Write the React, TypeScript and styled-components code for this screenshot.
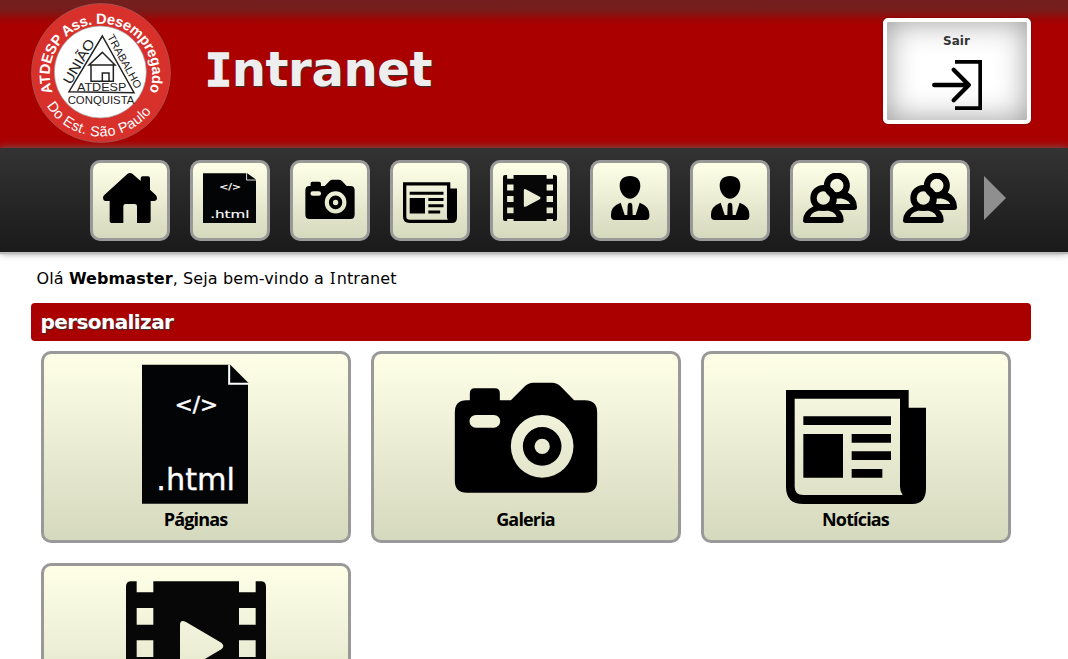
import React from "react";
import styled, { createGlobalStyle } from "styled-components";

const GlobalStyle = createGlobalStyle`
  * { box-sizing: border-box; }
  body {
    margin: 0;
    height: 659px;
    overflow: hidden;
    background: #fff;
    color: #000;
    font-family: Verdana, "DejaVu Sans", sans-serif;
    font-size: 16px;
  }
`;

const Header = styled.header`
  display: flex;
  align-items: flex-start;
  height: 148px;
  padding: 0 37px 0 31px;
  background:
    linear-gradient(to bottom, #741f1f 0, #741e1d 8px, #7d1817 12px, #8b1010 15px, #9c0605 19px, #a00 25px, rgba(170, 0, 0, 0) 26px),
    #a00;
`;

const LogoImage = styled.svg`
  width: 140px;
  height: 140px;
  margin-top: 3px;
  flex: none;
`;

const Title = styled.h1`
  margin: 41px 0 0 34px;
  flex: 1;
  font-size: 48px;
  line-height: 56px;
  font-weight: bold;
  letter-spacing: -0.35px;
  color: #eee;
  text-shadow: 1px 1px 1px #333;
`;

const TitleInitial = styled.span`
  font-family: Verdana, "DejaVu Sans Mono", monospace;
  font-size: 45px;
  line-height: 1;
  letter-spacing: -0.4px;
  -webkit-text-stroke: 1.4px #eee;
`;

const SerifI = styled.span`
  margin: 0 1.2px 0 0.8px;
  font-family: Verdana, "Noto Sans", sans-serif;
  line-height: 1;
`;

const ExitButton = styled.a`
  display: flex;
  flex-direction: column;
  align-items: center;
  width: 148px;
  height: 106px;
  margin-top: 18px;
  padding: 10px 1px 0 0;
  border: 4px solid #fff;
  border-radius: 5px;
  background: #fff;
  box-shadow: inset 0 0 30px #999, 0 0 2px #600;
  color: #333;
  font-size: 12px;
  line-height: 18px;
  font-weight: bold;
  text-decoration: none;
`;

const ExitImage = styled.svg`
  width: 50px;
  height: 50px;
  margin: 10px 0 0 1px;
`;

const Nav = styled.nav`
  position: relative;
  display: flex;
  align-items: flex-start;
  gap: 20px;
  height: 104px;
  padding: 12px 0 0 90px;
  background: linear-gradient(#333, #1a1a1a);
  box-shadow: 0 2px 1px #bbb, 0 0 8px #666;
`;

const tile = `
  border: 3px solid #999;
  border-radius: 10px;
  background: linear-gradient(#ffffe8, #d5d9bd);
`;

const NavTile = styled.a`
  ${tile}
  width: 80px;
  height: 81px;
  padding: 10px;
  flex: none;
`;

const Icon = styled.svg<{ $w: number; $h: number }>`
  display: block;
  width: ${(p) => p.$w}px;
  height: ${(p) => p.$h}px;
  flex: none;
`;

const NextArrow = styled.svg`
  width: 22px;
  height: 44px;
  margin: 16px 0 0 -6px;
`;

const Main = styled.main`
  padding: 0 37px 0 31px;
`;

const Greeting = styled.p`
  margin: 0;
  padding: 16px 0 0 5.5px;
  height: 51px;
  line-height: 22px;
  letter-spacing: 0.11px;
`;

const SectionTitle = styled.h2`
  margin: 0 0 10px;
  height: 38px;
  padding-left: 9.5px;
  border-radius: 4px;
  background: #a00;
  color: #fff;
  font-size: 20px;
  line-height: 38px;
  letter-spacing: -0.58px;
  text-shadow: 1px 1px 1px #333;
`;

const Cards = styled.div`
  display: grid;
  grid-template-columns: repeat(3, 310px);
  gap: 20px;
  padding-left: 10px;
`;

const Card = styled.a`
  ${tile}
  display: flex;
  flex-direction: column;
  align-items: center;
  height: 192px;
  padding-top: 10px;
`;

const CardLabel = styled.span`
  padding-right: 1px;
  color: #000;
  font-family: "Trebuchet MS", "Open Sans", sans-serif;
  font-size: 18px;
  line-height: 30px;
  font-weight: 700;
  letter-spacing: -0.85px;
`;

function Logo() {
  return (
    <LogoImage viewBox="33 9 420 420" fontFamily="Liberation Sans, Arial, sans-serif">
      <defs>
        <path id="arcTop" d="M 98 277 A 154 154 0 1 1 388 277" />
        <path id="arcBottom" d="M 80 317 A 190 190 0 0 0 406 317" />
      </defs>
      <circle cx="243" cy="219" r="208" fill="#d8302b" stroke="#a85a55" strokeWidth="2.5" />
      <circle cx="241" cy="216" r="138" fill="#fff" stroke="#999" strokeWidth="2" />
      <text fill="#fff" fontWeight="bold" fontSize="44">
        <textPath href="#arcTop" textLength="588">ATDESP Ass. Desempregado</textPath>
      </text>
      <text fill="#fff" fontSize="43">
        <textPath href="#arcBottom" textLength="370">Do Est. São Paulo</textPath>
      </text>
      <g fill="none" stroke="#222" strokeWidth="4.5">
        <path d="M247 108L147 275L342 278Z" />
        <path d="M207 195L247 157L285 195ZM213 195V244H280V195M247 244V219H267V244" />
      </g>
      <g fill="#222">
        <text x="171" y="274" fontSize="31" textLength="148" lengthAdjust="spacingAndGlyphs">ATDESP</text>
        <text x="143" y="311" fontSize="32" textLength="200" lengthAdjust="spacingAndGlyphs">CONQUISTA</text>
        <text fontSize="42" textLength="148" lengthAdjust="spacingAndGlyphs" transform="translate(152 256) rotate(-60)">UNIÃO</text>
        <text fontSize="32" textLength="180" lengthAdjust="spacingAndGlyphs" transform="translate(261 110) rotate(61.5)">TRABALHO</text>
      </g>
    </LogoImage>
  );
}

type IconName = "home" | "html" | "camera" | "news" | "film" | "person" | "people";

const viewBoxes: Record<IconName, string> = {
  home: "69 84 162 150",
  html: "336 73 324 419",
  camera: "249.5 72 468 420",
  news: "273 72 420 420",
  film: "288 78 420 420",
  person: "669 84 162 150",
  people: "369 84 162 150",
};

const drawings: Record<IconName, React.ReactNode> = {
  home: (
    <path d="M75 168Q69 166 69 158Q69 154 73 150L142 87Q150 81 158 87L182 108V100Q182 94 188 94H204Q210 94 210 100V134L227 150Q231 154 231 160Q230 168 222 168H212V227Q212 234 205 234H171V184Q171 177 164 177H137Q130 177 130 184V234H97Q89 234 89 227V168Z" />
  ),
  html: (
    <>
      <path fill="#020406" d="M336 75H601L654 128V491H336Z" />
      <path fill="none" stroke="#fff" strokeWidth="6" d="M597.5 75V132H654" />
      <g fill="#fff" stroke="#fff" fontFamily="DejaVu Sans, sans-serif" fontWeight="400">
        <text x="434" y="217" fontSize="66" strokeWidth="1.5" textLength="130" lengthAdjust="spacingAndGlyphs">&lt;/&gt;</text>
        <text x="379" y="449" fontSize="92" strokeWidth="1" textLength="236" lengthAdjust="spacingAndGlyphs">.html</text>
      </g>
    </>
  ),
  camera: (
    <path
      fillRule="evenodd"
      d="M305 181H315V160q0-15 15-15H390q15 0 15 15V181H438L480 139Q491 128 505 128H562Q576 128 587 139L628 181H660Q697 181 697 217V422Q697 458 660 458H306Q270 458 270 422V217Q270 181 305 181ZM333 225a19 19 0 0 0 0 38H387a19 19 0 0 0 0-38ZM438 319a94 94 0 1 0 188 0a94 94 0 1 0-188 0ZM474 319a58 58 0 1 0 116 0a58 58 0 1 0-116 0ZM509 319a23 23 0 1 0 46 0a23 23 0 1 0-46 0Z"
    />
  ),
  news: (
    <path
      fillRule="evenodd"
      d="M273 150H641V203H693V445Q693 492 652 492H325Q273 492 273 440ZM299 176V440Q299 465 325 465H623Q615 455 615 440V176ZM325 229H588V255H325ZM325 282H444V413H325ZM470 282H588V308H470ZM470 334H588V360H470ZM470 387H562V413H470Z"
    />
  ),
  film: (
    <path
      fill="#070707"
      fillRule="evenodd"
      d="M304 94H320V127H370V94H627V127H677V94H692Q708 94 708 110V465Q708 481 692 481H677V464H627V481H370V464H320V481H304Q288 481 288 465V110Q288 94 304 94ZM320 174V224H370V174ZM320 271V321H370V271ZM320 367V417H370V367ZM627 174V224H677V174ZM627 271V321H677V271ZM627 367V417H677V367ZM450 225Q450 207 468 216L574 278Q586 288 574 298L468 360Q450 369 450 351Z"
    />
  ),
  person: (
    <path d="M750 93C770 93 781 104 781 122C781 143 765 161 750 161C735 161 719 143 719 122C719 104 730 93 750 93ZM722 173L734 210H742L743 182Q744 173 750 173Q757 173 757 182L758 210H767L779 173Q808 184 808 208V214Q808 225 797 225H704Q693 225 693 214V208Q693 184 722 173Z" />
  ),
  people: (
    <>
      <circle cx="470.5" cy="121.5" r="29.5" fill="none" stroke="#000" strokeWidth="19" />
      <circle cx="430" cy="159" r="29.5" fill="none" stroke="#000" strokeWidth="19" />
      <path
        fillRule="evenodd"
        d="M466 148L502 142Q531 157 531 186Q531 195 523 195H470L455 182ZM468 177H511Q503 160 470 160Q471 169 468 177Z"
      />
      <path
        fillRule="evenodd"
        d="M402 183L430 188L458 183Q491 197 491 226Q491 234 483 234H377Q369 234 369 226Q369 199 402 183ZM390 216H470Q464 196 430 196Q397 196 390 216Z"
      />
    </>
  ),
};

function Picture({ name, w, h }: { name: IconName; w: number; h: number }) {
  return (
    <Icon $w={w} $h={h} viewBox={viewBoxes[name]} preserveAspectRatio="none">
      {drawings[name]}
    </Icon>
  );
}

const menu: IconName[] = ["home", "html", "camera", "news", "film", "person", "person", "people", "people"];

const sections: { icon: IconName; label?: string; width: number }[] = [
  { icon: "html", label: "Páginas", width: 108 },
  { icon: "camera", label: "Galeria", width: 156 },
  { icon: "news", label: "Notícias", width: 140 },
  { icon: "film", width: 140 },
];

export default function App() {
  return (
    <>
      <GlobalStyle />
      <Header>
        <Logo />
        <Title>
          <TitleInitial>I</TitleInitial>ntranet
        </Title>
        <ExitButton>
          Sair
          <ExitImage viewBox="186 180 150 150" fill="none" stroke="#000">
            <path strokeWidth="11" d="M255 185.5H330.5V324.5H255" />
            <path strokeWidth="13" strokeLinecap="round" strokeLinejoin="round" d="M192.5 255H296M251 209.5L296.5 255L251 300.5" />
          </ExitImage>
        </ExitButton>
      </Header>
      <Nav>
        {menu.map((name, i) => (
          <NavTile key={i}>
            <Picture name={name} w={54} h={50} />
          </NavTile>
        ))}
        <NextArrow viewBox="0 0 22 44">
          <path fill="#8f8f8f" d="M0 0L22 22L0 44Z" />
        </NextArrow>
      </Nav>
      <Main>
        <Greeting>
          Olá <b>Webmaster</b>, Seja bem-vindo a <SerifI>I</SerifI>ntranet
        </Greeting>
        <SectionTitle>personalizar</SectionTitle>
        <Cards>
          {sections.map((s) => (
            <Card key={s.icon}>
              <Picture name={s.icon} w={s.width} h={140} />
              {s.label && <CardLabel>{s.label}</CardLabel>}
            </Card>
          ))}
        </Cards>
      </Main>
    </>
  );
}
